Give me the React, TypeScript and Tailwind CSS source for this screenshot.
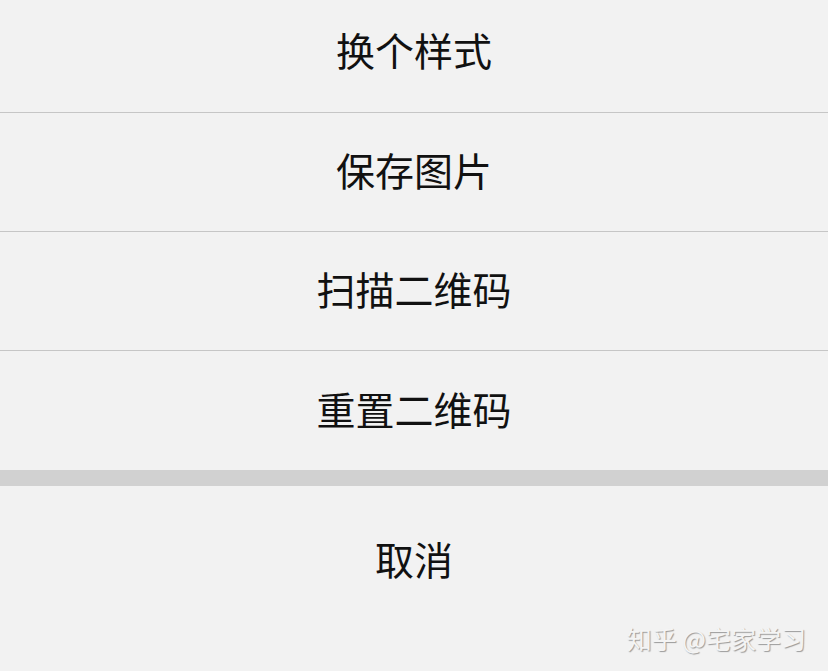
import React from 'react';

const actions = ['换个样式', '保存图片', '扫描二维码', '重置二维码'];

export default function App() {
  return (
    <div
      className="relative w-[828px] h-[671px] overflow-hidden bg-[#f2f2f2] text-[#111111]"
      style={{ fontFamily: '"Noto Sans CJK SC", "Noto Sans", sans-serif' }}
    >
      <div className="flex flex-col">
        {actions.map((label, i) => (
          <div
            key={label}
            className={`flex items-center justify-center text-[39px] leading-none ${
              i === 0 ? 'h-[113px] pb-[13px]' : 'h-[119px] pb-[5px]'
            } ${i < actions.length - 1 ? 'border-b border-[#c6c6c6]' : ''}`}
          >
            {label}
          </div>
        ))}
        <div className="h-[16px] bg-[#d1d1d1]" />
        <div className="flex h-[150px] items-center justify-center pb-[5px] text-[39px] leading-none">
          取消
        </div>
      </div>

      {/* watermark */}
      <div
        className="absolute right-[22px] bottom-[20px] text-[25px] leading-none text-[#f4f4f4]"
        style={{ textShadow: '1px 1px 1px #9a9a9a' }}
      >
        知乎 @宅家学习
      </div>
    </div>
  );
}
